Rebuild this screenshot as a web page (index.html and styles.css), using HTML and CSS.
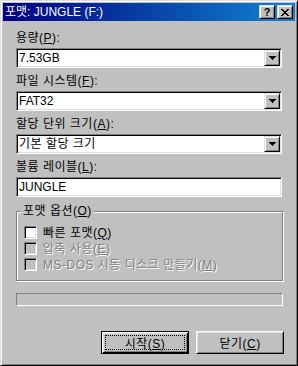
FILE: index.html
```html
<!DOCTYPE html>
<html lang="ko">
<head>
    <meta charset="UTF-8">
    <meta name="viewport" content="width=device-width, initial-scale=1.0">
    <title>포맷</title>
    <link rel="stylesheet" href="styles.css">
</head>
<body>
    <div class="window">
        <div class="titlebar">
            <span class="title">포맷: JUNGLE (F:)</span>
            <div class="caption-buttons">
                <span class="cap-btn help">?</span>
                <span class="cap-btn">
                    <svg width="8" height="7" viewBox="0 0 8 7" shape-rendering="crispEdges">
                        <path d="M0 0h2v1H0z M6 0h2v1H6z M1 1h2v1H1z M5 1h2v1H5z M2 2h4v1H2z M3 3h2v1H3z M2 4h4v1H2z M1 5h2v1H1z M5 5h2v1H5z M0 6h2v1H0z M6 6h2v1H6z" fill="#000"/>
                    </svg>
                </span>
            </div>
        </div>

        <div class="content">
            <div class="field">
                <div class="label">용량(<u>P</u>):</div>
                <div class="combo">
                    <span class="combo-text">7.53GB</span>
                    <span class="drop">
                        <svg width="7" height="4" viewBox="0 0 7 4" shape-rendering="crispEdges"><path d="M0 0h7v1H0z M1 1h5v1H1z M2 2h3v1H2z M3 3h1v1H3z" fill="#000"/></svg>
                    </span>
                </div>
            </div>
            <div class="field">
                <div class="label">파일 시스템(<u>F</u>):</div>
                <div class="combo">
                    <span class="combo-text">FAT32</span>
                    <span class="drop">
                        <svg width="7" height="4" viewBox="0 0 7 4" shape-rendering="crispEdges"><path d="M0 0h7v1H0z M1 1h5v1H1z M2 2h3v1H2z M3 3h1v1H3z" fill="#000"/></svg>
                    </span>
                </div>
            </div>
            <div class="field">
                <div class="label">할당 단위 크기(<u>A</u>):</div>
                <div class="combo">
                    <span class="combo-text hangul">기본 할당 크기</span>
                    <span class="drop">
                        <svg width="7" height="4" viewBox="0 0 7 4" shape-rendering="crispEdges"><path d="M0 0h7v1H0z M1 1h5v1H1z M2 2h3v1H2z M3 3h1v1H3z" fill="#000"/></svg>
                    </span>
                </div>
            </div>
            <div class="field">
                <div class="label">볼륨 레이블(<u>L</u>):</div>
                <div class="textbox">JUNGLE</div>
            </div>

            <div class="group">
                <span class="group-caption">포맷 옵션(<u>O</u>)</span>
                <div class="check-row">
                    <span class="check"></span>
                    <span class="check-label">빠른 포맷(<u>Q</u>)</span>
                </div>
                <div class="check-row disabled">
                    <span class="check"></span>
                    <span class="check-label">압축 사용(<u>E</u>)</span>
                </div>
                <div class="check-row disabled">
                    <span class="check"></span>
                    <span class="check-label">MS-DOS 시동 디스크 만들기(<u>M</u>)</span>
                </div>
            </div>

            <div class="progress"></div>

            <div class="buttons">
                <button class="btn default">시작(<u>S</u>)</button>
                <button class="btn">닫기(<u>C</u>)</button>
            </div>
        </div>
    </div>
</body>
</html>
```

FILE: styles.css
```css
body {
    margin: 0;
    font-family: 'Liberation Sans', 'Noto Sans CJK KR', sans-serif;
    font-size: 12px;
    color: #000;
    background-color: #c0c0c0;
}

u {
    text-underline-offset: 1px;
}

.window {
    width: 298px;
    height: 366px;
    box-sizing: border-box;
    padding: 2px;
    background-color: #c0c0c0;
    border: 1px solid;
    border-color: #dfdfdf #000 #000 #dfdfdf;
    box-shadow: inset 1px 1px #fff, inset -1px -1px #808080;
}

/* title bar */
.titlebar {
    height: 18px;
    display: flex;
    align-items: flex-start;
    padding: 0 2px;
    background: linear-gradient(to right, #000080, #1084d0);
    color: #fff;
}

.title {
    flex: 1;
    line-height: 18px;
    white-space: nowrap;
}

.caption-buttons {
    display: flex;
    gap: 2px;
    margin-top: 2px;
}

.cap-btn {
    width: 16px;
    height: 14px;
    box-sizing: border-box;
    display: flex;
    justify-content: center;
    align-items: center;
    background-color: #c0c0c0;
    border: 1px solid;
    border-color: #dfdfdf #000 #000 #dfdfdf;
    box-shadow: inset 1px 1px #fff, inset -1px -1px #808080;
}

.help {
    color: #000;
    font-family: 'Liberation Sans', sans-serif;
    font-weight: bold;
    font-size: 11px;
    line-height: 12px;
}

/* dialog body */
.content {
    padding: 10px 13px 0 13px;
}

.field + .field {
    margin-top: 6px;
}

.label,
.check-label,
.group-caption,
.hangul,
.btn {
    letter-spacing: 0.5px;
}

.label {
    height: 14px;
    line-height: 14px;
    margin-bottom: 3px;
    white-space: nowrap;
}

.combo,
.textbox {
    height: 20px;
    box-sizing: border-box;
    padding: 1px;
    background-color: #fff;
    border: 1px solid;
    border-color: #808080 #fff #fff #808080;
    box-shadow: inset 1px 1px #000, inset -1px -1px #dfdfdf;
}

.combo {
    display: flex;
}

.combo-text,
.textbox {
    line-height: 16px;
    padding-left: 1px;
}

.combo-text {
    flex: 1;
}

.textbox {
    padding-left: 2px;
}

.drop {
    width: 16px;
    height: 16px;
    box-sizing: border-box;
    display: flex;
    justify-content: center;
    align-items: center;
    background-color: #c0c0c0;
    border: 1px solid;
    border-color: #dfdfdf #000 #000 #dfdfdf;
    box-shadow: inset 1px 1px #fff, inset -1px -1px #808080;
}

/* options group */
.group {
    position: relative;
    margin-top: 14px;
    margin-right: -1px;
    padding: 13px 0 7px 7px;
    border: 1px solid #808080;
    box-shadow: inset 1px 1px #fff, 1px 1px #fff;
}

.group-caption {
    position: absolute;
    top: -8px;
    left: 4px;
    padding: 0 2px;
    line-height: 14px;
    background-color: #c0c0c0;
    white-space: nowrap;
}

.check-row {
    display: flex;
    align-items: flex-start;
    height: 16px;
}

.check {
    width: 13px;
    height: 13px;
    box-sizing: border-box;
    margin-top: 1px;
    background-color: #fff;
    border: 1px solid;
    border-color: #808080 #fff #fff #808080;
    box-shadow: inset 1px 1px #000, inset -1px -1px #dfdfdf;
}

.check-label {
    margin-left: 6px;
    line-height: 16px;
    white-space: nowrap;
}

.disabled .check {
    background-color: #c0c0c0;
}

.disabled .check-label {
    color: #808080;
    text-shadow: 1px 1px 0 #fff;
}

.progress {
    height: 13px;
    margin-top: 12px;
    margin-right: -1px;
    box-sizing: border-box;
    border: 1px solid;
    border-color: #808080 #fff #fff #808080;
}

/* push buttons */
.buttons {
    display: flex;
    justify-content: flex-end;
    gap: 7px;
    margin-top: 25px;
    margin-right: -2px;
}

.btn {
    position: relative;
    width: 88px;
    height: 23px;
    box-sizing: border-box;
    padding: 0;
    font: inherit;
    color: #000;
    background-color: #c0c0c0;
    border: 1px solid;
    border-color: #fff #000 #000 #fff;
    box-shadow: inset 1px 1px #dfdfdf, inset -1px -1px #808080;
}

.default {
    border-color: #000;
    box-shadow: inset 1px 1px #fff, inset -1px -1px #000, inset 2px 2px #dfdfdf, inset -2px -2px #808080;
}

.default::after {
    content: '';
    position: absolute;
    top: 3px;
    left: 3px;
    right: 3px;
    bottom: 3px;
    border: 1px dotted #000;
}
```
